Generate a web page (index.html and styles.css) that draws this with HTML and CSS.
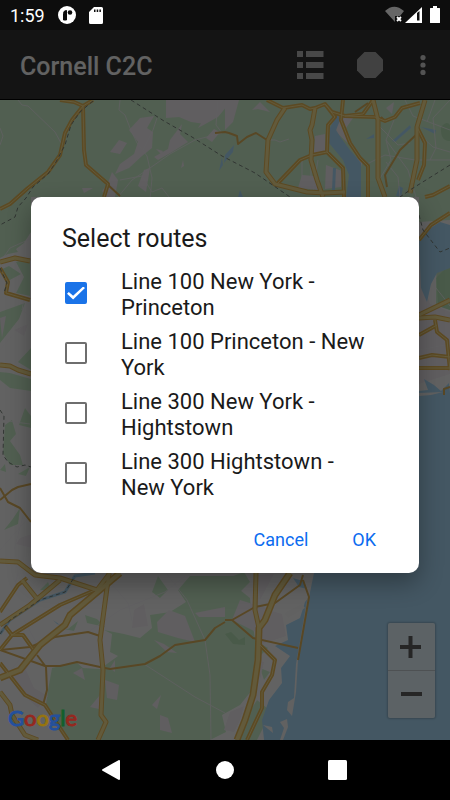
FILE: index.html
```html
<!DOCTYPE html>
<html lang="en">
<head>
<meta charset="utf-8">
<meta name="viewport" content="width=device-width, initial-scale=1">
<title>Cornell C2C</title>
<link rel="stylesheet" href="styles.css">
</head>
<body>
<div class="screen">
  <div class="app">
    <div class="status">
      <span class="clock">1:59</span>
      <svg class="status-icon" width="18" height="18" viewBox="0 0 18 18"><circle cx="9" cy="9" r="9" fill="#fff"/><path d="M5.500 14V7.500Q5.500 4.500 8.500 4.500V14Z" fill="#0d0d0d" stroke="#0d0d0d" stroke-linejoin="round"/><circle cx="12" cy="6.500" r="2.300" fill="#0d0d0d"/></svg>
      <svg class="status-icon" width="14" height="17" viewBox="0 0 14 17"><path fill="#fff" fill-rule="evenodd" d="M5 0H12.500Q14 0 14 1.500V15.500Q14 17 12.500 17H1.500Q0 17 0 15.500V5ZM5 2.500V5H6.500V2.500ZM7.700 2.500V5H9.200V2.500ZM10.400 2.500V5H11.900V2.500Z"/></svg>
      <svg class="status-right" width="56" height="18" viewBox="0 0 56 18"><path d="M0 5Q9-3.500 19 5L15 10H10V16Z" fill="#666"/><path d="M12 11l4 4m0-4l-4 4" stroke="#fff" stroke-width="1.800"/><path d="M20 17L37 1V17Z" fill="#fff"/><path d="M32 7l2.500-2V14.500H32Z" fill="#0d0d0d"/><path d="M48 0h4v2h2.500q.5 0 .5.500v14q0 .5-.5.500h-9q-.5 0-.5-.5v-14q0-.5.5-.5H48Z" fill="#fff"/></svg>
    </div>
    <header class="toolbar">
      <h1>Cornell C2C</h1>
      <button class="tool" aria-label="Routes"><svg width="28" height="30" viewBox="0 0 28 30" fill="#b4b4b4"><path d="M1 1h6v6H1zM10 1h17.500v6H10zM1 12h6v6H1zM10 12h17.500v6H10zM1 23h6v6H1zM10 23h17.500v6H10z"/></svg></button>
      <button class="tool" aria-label="Stop"><svg width="28" height="28" viewBox="0 0 28 28"><path d="M8.500 1h11L27 8.500v11L19.500 27h-11L1 19.500v-11Z" fill="#a4a4a4"/></svg></button>
      <button class="tool more" aria-label="More options"><svg width="6" height="20" viewBox="0 0 6 20" fill="#d0d0d0"><circle cx="3" cy="2.600" r="2.600"/><circle cx="3" cy="10" r="2.600"/><circle cx="3" cy="17.400" r="2.600"/></svg></button>
    </header>
    <main class="map">
      <svg class="map-art" viewBox="0 100 450 640" preserveAspectRatio="xMidYMid slice" aria-hidden="true">
        <defs>
          <path id="mid" d="M60 100l14 2 9 4-11 14-7 13-5 22-12 17-20 16-18 16-10 5M93 100l-10 6 1 44 2 15 22 19-4 13M267 100l16 8 19-3 8 4 5-1 10-4 7 8 13 4 30 1 10 4 10-4 7-9 18-5M325 104l10 13-7 8-1 27 16 16 1 29M343 100l-2 20 9 23 10 15 8 8v31M278 183l22-23 12-5 15-3M345 116l18-2 10-14M417 127l8 16-1 22-6 15M0 268l8 14-2 11 24 7M419 240l12-15 19-12M425 197l8-2 17-9M435 320l2 12 10 8 3 30M419 335l18-10M419 358l13-3 18 2M419 368h31M0 612l18-27 9-7M0 650l12-15 48-30 35-15M5 626l7 9h11l10 14M0 663l25 32 20 10 13 20 10 15M260 645l15 15-3 15-10 17v16l-15 32"/>
          <path id="major" d="M285 108l-8 12-9 20-2 32 9 12 32 8 18 1 20-1M315 108l-3 17-2 5 2 10-1 20 6 20 6 17M373 100l5 20v58l7 19M425 100l-8 27v33l-7 33M0 262l15-4 15 3M0 365l10 1 8 4 13 4M419 315l31-15M419 318l16-1 15 3M22 580l16 20M109 573l-9 67 3 30-2 45 5 7-8 18M256 573l-1 37 4 18M0 692l10 13 2 10 13 20 13 5M0 561l18 1 17 13 25 3 37 12 13-17M0 625l30-20 30-25"/>
          <path id="motorway" d="M120 573l-50 42-5 10-25 20-20 25-20 8M290 573l-15 22-10 25-6 8-1 32-5 35-8 25-8 20"/>
        </defs>
        <rect y="100" width="450" height="640" fill="#f6f6f6"/>
        <g class="green">
          <path d="M0 100H450V220L419 222V197H31V232L24 243L12 252L0 258Z"/>
          <path d="M8 254l6-8 4 6zM16 262l14-4v38l-14-3 8-16zM0 312l25-9-6 16-19 24zM0 270l9-4 12 8-15 8zM18 362l13-14v22zM0 372l10 1 21 6v12l-21-3-10-8zM5 425l7-5 4 14-6 7 10 14 3 10-13 0-7-12zM25 408l6 8v12l-12-3zM12 520l8-12-2 16-14 6zM18 474l12-7-4 9zM0 470l5-6 1 8z"/>
          <path d="M436 278l14-14v46l-14-5zM420 282l5-6 4 9-6 4z"/>
          <path d="M52 668L76 662 83 668 100 669 118 656 110 652 112 634 104 630 124 634 140 638 152 628 150 615 170 612 186 602 178 590 190 576H246L240 590 250 598 252 620 256 645 252 690 240 705 222 715 226 732 210 740H66L57 720 46 704 48 690Z"/>
          <path d="M228 578l16-6 6 10-10 10 6 10-16 8zM85 615l12 4 8 8-18-4zM152 592l6-16 10 14-8 8zM254 640l14 8-8 8zM257 700l10 8-2 16-8 16h-20l10-24zM54 627l14 2 10-8-4 10zM260 668l10 4-6 8zM40 590l8-8 3 8z"/>
        </g>
        <g class="town">
          <path d="M166 100h57l-14 14-4 10-14-2-12-5-13 1zM198 128l14-22 8-6h12l-14 17zM140 118l14-2-7 12 6 4-1 16-10 8-13 12-14 6 5-10 14-10 4-12-9-12zM119 140l8 3-7 11-10-2zM182 124l-2 10 8 8-16 10-14 8-4-3 14-8 2-9zM150 168l-4 24-8-6 6-16zM112 172l6 8-3 17h-9l-4-6 6-8zM82 188h11l-9 5zM156 149l7 2-2 3zM183 160l1 6-3 2zM206 138l8-9 6 3-8 10z"/>
          <path d="M225 100h14l-6 22 -8 8zM252 110l8-8 10 10-12-3zM315 136l10-2v20l-11-1zM302 175l12 1 7 14-23-2zM338 116l15 2-7 10 5 18-15-14zM326 165l16 6-1 16-16 2zM386 108l8-6-2 12zM355 158l8 2-2 7z"/>
          <path d="M419 248l10 2-8 26 9 28 20 8v62l-31 10zM14 330l14-6-4 12zM6 316l-4 22-2-20zM20 538l12-4v14l-16-4zM38 648l-12 22 8 18 14 8-10 12-18-16-8-12z"/>
          <path d="M157 622l12-12 16 6 10 26-17-4-20-6zM195 613l30-6v10l-26 0zM105 680l14 5-2 15-10-2zM73 673l9-5 3 12zM160 715l8 3 4 15-12-3zM152 705l9-10-4 14zM90 707l10-12-1 14zM134 610l10-6 4 22-16 2zM154 640l10 4 13 9-10-1zM110 668l5-8 0 12zM240 600l26 8-6 26-28-14zM262 608l20 6 4 22-24 8zM258 575l16-1-14 26zM256 660l8 2-4 18zM230 712l14-6-4 14-6 12-10-2z"/>
        </g>
        <g class="grove"><path d="M441 127q6-7 9-2v16q-10 0-9-14zM225 634l6-2 8 8 6-3 0 8-12-1zM436 270l14-6v46l-12-4z" opacity=".6"/></g>
        <g class="water">
          <path d="M336 116L330 128 329 143 343 160 349 175 346 198H361V163L350 150 341 138 336 130 341 118Z"/>
          <path d="M225 155l9-10-1 7-9 11zM222 157l-3 14 4-6zM392 141l18-16 1 3-16 14zM421 127l15 3-1 4zM366 139l8-5 0 4zM333 168l3 0-1 22-3 0zM396 196l3-10 4 2-2 9zM328 108l12 6-2 4-10-7zM238 197l2-7 3 7z"/>
          <path d="M419 240L426 231 440 222 450 225V268L437 273 431 284 427 302 421 288Z"/>
          <path d="M419 391L428 390 424 379 434 385 441 391 449 383 450 393V740H264L262 720 269 700 282 683 281 668 290 656 275 646 288 640 286 625 300 618 305 602 309 597 314 573 340 500H419Z"/>
          <path d="M53 620l7 5-3-1zM293 578l6 9 8 2-4-8z"/>
        </g>
        <g class="sand">
          <path d="M286 612l16-8 3 4-17 10-4-4zM311 580l-2 18-7 40-4 22-2 32-4 24-5-6 1-8 6-4 2-34 5-28 5-30zM280 722l7-3 1 8-5 13h-3l4-12zM263 725l9 2 1 6zM419 393l24-1-12 3-12 1z"/>
        </g>
        <g class="lane">
          <path d="M18 100l4 5 6 1 27 26 6 11M0 128l3 8-3 9M120 100l-1 10 6 5 5 13 7 15 10 13 5 22-2 22M218 100l-2 25 6 8-27 7-25 14-20 14-18 12-14 17M120 180l22-4 10 16 10-4 7 9M157 118l-4 12-10 20M267 140h8l5 2 9-3M302 160v30M311 160v30M318 160l-5 30"/>
          <path d="M378 125l20 20 12-2M405 100l8 16 37 14M386 140l5 20-12 20M394 120l-8 20 22 30 8 27M420 135l13 12 17 5M430 160l6-12-3-30 17-18M365 165l20-10 30 5M400 197l-2-20-12-15M435 100l-8 22M416 160l34 0"/>
          <path d="M3 258l7-10 20-9M0 350l10-12 20-18M24 298l-2 12 8 6M0 420l30 4M0 550l30-34M30 490l-16 60M436 288l8 10 6 8M419 350l31-6"/>
          <path d="M166 573l21 27 18 40 5 35 1 65M144 664l51 33 30 16M88 632l32-22 45-18 20-16M111 583l17 20 5 22M0 604l12 8M38 640l-28 30M18 573l-6 22M24 620l12 22"/>
        </g>
        <path class="river" d="M0 634L10 620 40 600 65 592 75 576 95 573"/>
        <g class="casing">
          <path class="minor" d="M215 133l10-1 4 1 8 3 1 8 9-7 9-4 11 7M385 121l-4-4M417 134l-17 16-15 25 2 12M0 500l12-10 6-3 13-3M0 488l8 14 12 6 11 14M0 650l30-3 25-10 33-5 12 4M0 650l45 16h15l17-4 23 5 10 2 35-5 15-8 15-11 30-5 10-12 10-6M37 655l9 12 1 23-4 15M225 620h7l23-13 20-4 25-18 3-10M232 620l21 18 45 10M303 580l6 17-4 23-7 40M444 395v-6l6-2M368 103l-13 9M107 184l13 12"/>
          <use href="#mid" class="w3"/><use href="#major" class="w4"/><use href="#motorway" class="w5"/>
        </g>
        <g class="roadfill">
          <use href="#mid" class="f1"/><use href="#major" class="f2"/><use href="#motorway" class="f3"/>
        </g>
        <path class="border" d="M131 100L164 121 192 137 222 156 255 173 290 197M450 165L410 190 400 197M93 101L80 112 71 125 65 145 56 162 48 174 33 187 26 198 18 207 15 217 0 225M0 268L7 283 4 293M0 410L4 416 3 455 8 462 17 467 25 465 31 467M419 215L423 230 440 252 450 248M0 634L10 620 40 600 65 592 75 576"/>
      </svg>
      <div class="map-controls">
        <button class="zoom-btn" aria-label="Zoom in"><svg width="23" height="22" viewBox="0 0 23 22"><path d="M0 11h21M10.500 0v22" stroke="#606060" stroke-width="4"/></svg></button>
        <button class="zoom-btn" aria-label="Zoom out"><svg width="23" height="22" viewBox="0 0 23 22"><path d="M1 10h21" stroke="#606060" stroke-width="4"/></svg></button>
      </div>
    </main>
    <div class="overlay">
      <form class="dialog" role="dialog" aria-labelledby="dialog-title">
        <h2 id="dialog-title">Select routes</h2>
        <label class="route"><input type="checkbox" checked><span>Line 100 New York - Princeton</span></label>
        <label class="route"><input type="checkbox"><span>Line 100 Princeton - New York</span></label>
        <label class="route"><input type="checkbox"><span>Line 300 New York - Hightstown</span></label>
        <label class="route"><input type="checkbox"><span>Line 300 Hightstown - New York</span></label>
        <div class="actions">
          <button type="button">Cancel</button>
          <button type="button">OK</button>
        </div>
      </form>
    </div>
    <div class="brand"><span class="b">G</span><span class="r">o</span><span class="y">o</span><span class="b">g</span><span class="g">l</span><span class="r">e</span></div>
  </div>
  <nav class="nav">
    <button aria-label="Back"><svg width="20" height="20" viewBox="0 0 20 20"><path d="M17 1v18L1 10Z" fill="#fff" stroke="#fff" stroke-width="2" stroke-linejoin="round"/></svg></button>
    <button aria-label="Home"><svg width="20" height="20" viewBox="0 0 20 20"><circle cx="10" cy="10" r="9" fill="#fff"/></svg></button>
    <button aria-label="Overview"><svg width="20" height="20" viewBox="0 0 20 20"><rect width="19" height="20" rx="1.500" fill="#fff"/></svg></button>
  </nav>
</div>
</body>
</html>
```
FILE: styles.css
```css
* { box-sizing: border-box; }

body {
  margin: 0;
  background: #000;
  font-family: Roboto, "Liberation Sans", sans-serif;
}

button {
  border: 0;
  padding: 0;
  background: none;
  font: inherit;
  color: inherit;
}

svg { display: block; }

.screen {
  display: flex;
  flex-direction: column;
  min-height: 100vh;
}

.app {
  position: relative;
  flex: 1;
  display: flex;
  flex-direction: column;
}

.status {
  position: relative;
  z-index: 2;
  display: flex;
  align-items: center;
  gap: 13px;
  height: 30px;
  padding: 0 9px 0 10px;
  background: #0d0d0d;
  color: #fff;
  font-size: 18px;
}

.status-right { margin-left: auto; }

.toolbar {
  display: flex;
  align-items: center;
  height: 70px;
  padding: 0 12px 0 20px;
  background: #333;
  border-bottom: 1px solid #000;
  color: #f4f4f4;
}

.toolbar h1 {
  flex: 1;
  margin: 0;
  padding-top: 3px;
  font-size: 25px;
  font-weight: 500;
}

.tool {
  display: grid;
  place-items: center;
  width: 60px;
  height: 60px;
}

.tool.more { width: 30px; margin-left: 8px; }

.map {
  position: relative;
  flex: 1;
  overflow: hidden;
}

.map-art {
  position: absolute;
  inset: 0;
  width: 100%;
  height: 100%;
}

.green { fill: #cbeecb; }
.town { fill: #f0eaf0; }
.grove { fill: #a8d8a8; }
.water { fill: #aadaf8; }
.sand { fill: #f2f2f2; }
.lane { fill: none; stroke: #f2f0f4; stroke-width: 1; opacity: 0.8; }
.river { fill: none; stroke: #aadaf8; stroke-width: 3; }

.casing,
.roadfill {
  fill: none;
  stroke-linejoin: round;
}

.casing { stroke: #e6b858; }
.roadfill { stroke: #f6e094; }
.minor { stroke: #dcb25c; stroke-width: 2; }
.w3 { stroke-width: 4; }
.w4 { stroke-width: 5; }
.w5 { stroke-width: 7; }
.f1 { stroke-width: 1; }
.f2 { stroke-width: 3; }
.f3 { stroke-width: 4; }

.border {
  fill: none;
  stroke: #7b857e;
  stroke-width: 1;
  stroke-dasharray: 4 3;
}

.map-controls {
  position: absolute;
  right: 15px;
  bottom: 22px;
  display: flex;
  flex-direction: column;
  width: 47px;
  background: rgba(255, 255, 255, 0.7);
  border-radius: 2px;
  box-shadow: 0 0 2px 1px rgba(0, 0, 0, 0.2);
}

.zoom-btn {
  display: grid;
  place-items: center;
  height: 47px;
}

.zoom-btn + .zoom-btn { border-top: 1px solid #c4cbd0; height: 48px; }

.overlay {
  position: absolute;
  inset: 0;
  z-index: 1;
  display: flex;
  align-items: center;
  padding: 30px 31px 0;
  background: rgba(0, 0, 0, 0.6);
}

.dialog {
  flex: 1;
  padding: 26px 31px 10px;
  background: #fff;
  border-radius: 10px;
  box-shadow: 0 10px 24px rgba(0, 0, 0, 0.32);
  color: #1a1a1a;
}

.dialog h2 {
  margin: 0 0 8px;
  font-size: 25px;
  font-weight: 400;
  line-height: 32px;
}

.route {
  display: flex;
  align-items: center;
  gap: 34px;
  min-height: 60px;
  padding: 0 10px 0 3px;
  font-size: 22px;
  line-height: 26px;
}

.route span { padding-top: 3px; }

.route input {
  appearance: none;
  flex: none;
  display: grid;
  place-items: center;
  width: 22px;
  height: 22px;
  margin: 0;
  border: 2px solid #6e6e6e;
  border-radius: 2px;
}

.route input:checked {
  border-color: #1a73e8;
  background: #1a73e8;
}

.route input:checked::before {
  content: "";
  width: 18px;
  height: 13px;
  background: #fff;
  clip-path: polygon(0 55%, 10% 42%, 34% 72%, 90% 0, 100% 12%, 34% 100%);
}

.actions {
  display: flex;
  justify-content: flex-end;
  gap: 20px;
  margin-top: 12px;
}

.actions button {
  height: 48px;
  padding: 0 12px;
  color: #0b6cf0;
  font-size: 18px;
}

.brand {
  position: absolute;
  left: 8px;
  bottom: 8px;
  z-index: 1;
  font-family: Lato, Roboto, sans-serif;
  font-size: 22px;
  line-height: 28px;
  -webkit-text-stroke: 1px currentColor;
}

.brand .b { color: #24509c; }
.brand .r { color: #94281f; }
.brand .y { color: #96740f; }
.brand .g { color: #12602c; }

.nav {
  display: flex;
  justify-content: center;
  gap: 53px;
  height: 60px;
  background: #000;
}

.nav button {
  display: grid;
  place-items: center;
  width: 60px;
}
```
